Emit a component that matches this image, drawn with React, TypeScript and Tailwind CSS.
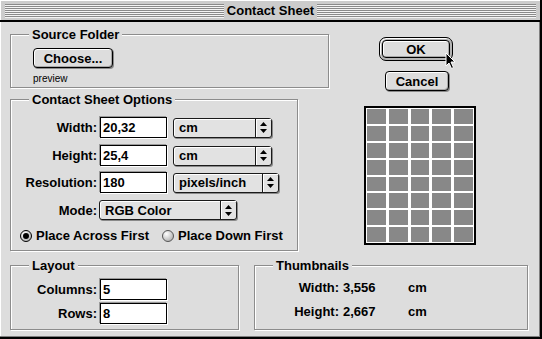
import React from "react";

function GroupBox({
  label,
  className,
  children,
}: {
  label: string;
  className: string;
  children?: React.ReactNode;
}) {
  return (
    <div
      className={`relative border border-[#8c8c8c] shadow-[inset_1px_1px_0_#ffffff,1px_1px_0_#ffffff] ${className}`}
    >
      <div className="absolute -top-[8px] left-[18px] bg-[#dddddd] px-[3px] text-[13px] font-bold leading-[15px] text-black">
        {label}
      </div>
      {children}
    </div>
  );
}

function Field({ value, className = "w-[67px]" }: { value: string; className?: string }) {
  return (
    <div
      className={`flex h-[21px] items-center border border-black bg-white pl-[2px] text-[13px] font-bold leading-[15px] shadow-[-1px_-1px_0_#9a9a9a,1px_1px_0_#ffffff] ${className}`}
    >
      {value}
    </div>
  );
}

function Arrows() {
  return (
    <svg width="7" height="11" viewBox="0 0 7 11">
      <polygon points="3.5,0 7,4 0,4" fill="#000" />
      <polygon points="0,7 7,7 3.5,11" fill="#000" />
    </svg>
  );
}

function Popup({ text, className }: { text: string; className: string }) {
  return (
    <div
      className={`flex h-[20px] rounded-[3px] border border-[#1a1a1a] bg-[#e2e2e2] shadow-[1px_1px_0_#8a8a8a,inset_1px_1px_0_#ffffff] ${className}`}
    >
      <div className="flex flex-1 items-center pl-[5px] text-[13px] font-bold leading-[15px]">{text}</div>
      <div className="flex w-[16px] items-center justify-center border-l border-[#1a1a1a] shadow-[inset_1px_1px_0_#ffffff]">
        <Arrows />
      </div>
    </div>
  );
}

function Radio({ on }: { on: boolean }) {
  return (
    <div
      className={`flex h-[12px] w-[12px] items-center justify-center rounded-full border ${
        on ? "border-black" : "border-[#555555]"
      } bg-[radial-gradient(circle_at_35%_30%,#ffffff,#a0a0a0)]`}
    >
      {on && <div className="h-[6px] w-[6px] rounded-full bg-black" />}
    </div>
  );
}

function Cursor() {
  return (
    <svg width="12" height="18" viewBox="0 0 12 18" className="absolute left-[65px] top-[14px]">
      <path
        d="M1 1 L1 14 L4 11 L6.5 16.5 L8.5 15.5 L6 10 L10 10 Z"
        fill="#000"
        stroke="#fff"
        strokeWidth="1"
        strokeLinejoin="miter"
      />
    </svg>
  );
}

function Stripes() {
  return (
    <div className="flex flex-1 flex-col">
      {Array.from({ length: 7 }).map((_, i) => (
        <div key={i} className="h-[2px] border-t border-[#8a8a8a] bg-[#f4f4f4]" />
      ))}
    </div>
  );
}

export default function App() {
  const cells = Array.from({ length: 40 });
  return (
    <div className="flex h-[339px] w-[542px] flex-col border-b-2 border-r-2 border-black bg-[#dddddd] font-['Liberation_Sans',Arial,sans-serif] text-black">
      {/* Title bar */}
      <div className="flex h-[20px] items-center border-l border-t border-white bg-[#cccccc] pl-[4px] pr-[4px]">
        <Stripes />
        <div className="px-[3px] text-[13px] font-bold leading-[15px]">Contact Sheet</div>
        <Stripes />
      </div>
      <div className="h-[2px] bg-black" />

      {/* Body */}
      <div className="flex flex-1 flex-col border-b border-r border-[#808080] pl-[10px] shadow-[inset_1px_0_0_#ffffff]">
        <div className="mt-[12px] flex">
          {/* Left column */}
          <div className="flex w-[319px] flex-col">
            <GroupBox label="Source Folder" className="h-[54px] w-[319px]">
              <div className="ml-[22px] mt-[13px] flex h-[20px] w-[80px] items-center justify-center rounded-[4px] border border-black bg-[#dddddd] text-[13px] font-bold leading-[15px] shadow-[inset_1px_1px_0_#ffffff,inset_-1px_-1px_0_#a8a8a8,1px_1px_0_#8a8a8a]">
                Choose...
              </div>
              <div className="ml-[22px] mt-[5px] text-[10px] leading-[12px]">preview</div>
            </GroupBox>

            <GroupBox label="Contact Sheet Options" className="mt-[11px] h-[152px] w-[288px]">
              <div className="mt-[17px] flex items-center">
                <div className="w-[86px] text-right text-[13px] font-bold leading-[15px]">Width:</div>
                <div className="ml-[3px]">
                  <Field value="20,32" />
                </div>
                <Popup text="cm" className="ml-[6px] w-[99px]" />
              </div>
              <div className="mt-[7px] flex items-center">
                <div className="w-[86px] text-right text-[13px] font-bold leading-[15px]">Height:</div>
                <div className="ml-[3px]">
                  <Field value="25,4" />
                </div>
                <Popup text="cm" className="ml-[6px] w-[99px]" />
              </div>
              <div className="mt-[6px] flex items-center">
                <div className="w-[86px] text-right text-[13px] font-bold leading-[15px]">Resolution:</div>
                <div className="ml-[3px]">
                  <Field value="180" />
                </div>
                <Popup text="pixels/inch" className="ml-[6px] w-[106px]" />
              </div>
              <div className="mt-[7px] flex items-center">
                <div className="w-[86px] text-right text-[13px] font-bold leading-[15px]">Mode:</div>
                <Popup text="RGB Color" className="ml-[2px] w-[138px]" />
              </div>
              <div className="ml-[9px] mt-[8px] flex items-center">
                <Radio on />
                <div className="ml-[4px] w-[126px] text-[13px] font-bold leading-[15px]">Place Across First</div>
                <Radio on={false} />
                <div className="ml-[4px] text-[13px] font-bold leading-[15px]">Place Down First</div>
              </div>
            </GroupBox>
          </div>

          {/* Right column */}
          <div className="ml-[35px] flex flex-col">
            <div className="relative ml-[15px] mt-[3px] h-[24px] w-[74px] rounded-[7px] border border-black bg-[#b4b4b4] p-[2px] shadow-[inset_1px_1px_0_#ffffff]">
              <div className="flex h-full w-full items-center justify-center rounded-[4px] border border-black bg-[#dddddd] text-[13px] font-bold leading-[15px] shadow-[inset_1px_1px_0_#ffffff,inset_-1px_-1px_0_#a8a8a8]">
                OK
              </div>
              <Cursor />
            </div>
            <div className="ml-[21px] mt-[10px] flex h-[20px] w-[64px] items-center justify-center rounded-[4px] border border-black bg-[#dddddd] text-[13px] font-bold leading-[15px] shadow-[inset_1px_1px_0_#ffffff,inset_-1px_-1px_0_#a8a8a8,1px_1px_0_#8a8a8a]">
              Cancel
            </div>
            <div className="mt-[15px] grid h-[139px] w-[112px] grid-cols-5 grid-rows-8 gap-x-[3px] gap-y-[2px] border-2 border-black bg-white p-[1px]">
              {cells.map((_, i) => (
                <div key={i} className="bg-[#888888]" />
              ))}
            </div>
          </div>
        </div>

        {/* Bottom row */}
        <div className="mt-[14px] flex">
          <GroupBox label="Layout" className="h-[65px] w-[229px]">
            <div className="mt-[13px] flex items-center">
              <div className="w-[86px] text-right text-[13px] font-bold leading-[15px]">Columns:</div>
              <div className="ml-[3px]">
                <Field value="5" />
              </div>
            </div>
            <div className="mt-[3px] flex items-center">
              <div className="w-[86px] text-right text-[13px] font-bold leading-[15px]">Rows:</div>
              <div className="ml-[3px]">
                <Field value="8" />
              </div>
            </div>
          </GroupBox>
          <GroupBox label="Thumbnails" className="ml-[15px] h-[65px] w-[274px]">
            <div className="mt-[14px] flex text-[13px] font-bold leading-[15px]">
              <div className="w-[84px] text-right">Width:</div>
              <div className="ml-[4px] w-[65px]">3,556</div>
              <div>cm</div>
            </div>
            <div className="mt-[9px] flex text-[13px] font-bold leading-[15px]">
              <div className="w-[84px] text-right">Height:</div>
              <div className="ml-[4px] w-[65px]">2,667</div>
              <div>cm</div>
            </div>
          </GroupBox>
        </div>
      </div>
    </div>
  );
}
